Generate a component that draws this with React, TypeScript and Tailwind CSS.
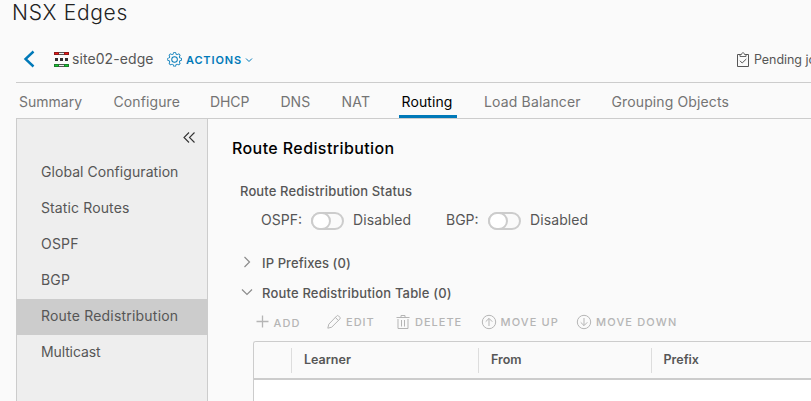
import React from "react";

const tabs = [
  { label: "Summary", box: "w-[94.5px]", track: "tracking-[0px]" },
  { label: "Configure", box: "w-[96.5px]", track: "tracking-[0.1px]" },
  { label: "DHCP", box: "w-[70.5px]", track: "tracking-[-0.1px]" },
  { label: "DNS", box: "w-[61px]", track: "tracking-[0px]" },
  { label: "NAT", box: "w-[60px]", track: "tracking-[0.2px]" },
  { label: "Routing", box: "w-[82.5px]", track: "tracking-[0.1px]", active: true },
  { label: "Load Balancer", box: "w-[127.5px]", track: "tracking-[0.15px]" },
  { label: "Grouping Objects", box: "w-[130px]", track: "tracking-[0.12px]" },
];

const navItems = [
  { label: "Global Configuration", track: "tracking-[0.06px]" },
  { label: "Static Routes", track: "tracking-[0.12px]" },
  { label: "OSPF", track: "tracking-[0.2px]" },
  { label: "BGP", track: "tracking-[0.2px]" },
  { label: "Route Redistribution", track: "tracking-[0.2px]", active: true },
  { label: "Multicast", track: "tracking-[-0.12px]" },
];

function EdgeIcon() {
  return (
    <svg width="15" height="15" viewBox="0 0 15 15" shapeRendering="crispEdges">
      <rect x="0" y="0" width="15" height="3" fill="#555" />
      <rect x="0" y="0" width="5" height="3" fill="#8c1a1a" />
      <rect x="10" y="0" width="5" height="3" fill="#8c1a1a" />
      <rect x="1" y="1" width="3" height="1" fill="#f01818" />
      <rect x="5" y="1" width="5" height="1" fill="#eee" />
      <rect x="11" y="1" width="3" height="1" fill="#f01818" />
      <rect x="1" y="6" width="3" height="3" fill="#333" />
      <rect x="6" y="6" width="3" height="3" fill="#333" />
      <rect x="11" y="6" width="3" height="3" fill="#333" />
      <rect x="0" y="12" width="15" height="3" fill="#555" />
      <rect x="0" y="12" width="5" height="3" fill="#1d7a2c" />
      <rect x="10" y="12" width="5" height="3" fill="#1d7a2c" />
      <rect x="1" y="13" width="3" height="1" fill="#12d030" />
      <rect x="5" y="13" width="5" height="1" fill="#eee" />
      <rect x="11" y="13" width="3" height="1" fill="#12d030" />
    </svg>
  );
}

function GearIcon() {
  return (
    <svg width="15" height="15" viewBox="2 2 32 32" fill="#0079b8" className="-mt-[2px] shrink-0">
      <path d="M18.1 11a7 7 0 1 0 7 7 7 7 0 0 0-7-7Zm0 12a5 5 0 1 1 5-5 5 5 0 0 1-5 5Z" />
      <path d="m32.8 14.7-2.8-.9-.6-1.6 1.4-2.6a1.1 1.1 0 0 0-.2-1.3l-2.9-2.9a1.1 1.1 0 0 0-1.3-.2l-2.6 1.4-1.6-.7-.9-2.8A1.1 1.1 0 0 0 20.300 2.300h-4.100a1.100 1.100 0 0 0-1 .8l-.9 2.800-1.700.7L10 5.200a1.100 1.100 0 0 0-1.300.2L5.800 8.200a1.100 1.100 0 0 0-.2 1.300L7 12.100l-.7 1.600-2.800.9a1.100 1.100 0 0 0-.8 1v4.100a1.100 1.100 0 0 0 .8 1l2.800.9.700 1.600-1.400 2.600a1.100 1.100 0 0 0 .2 1.300l2.900 2.900a1.100 1.100 0 0 0 1.300.2l2.700-1.400 1.600.6.9 2.900a1.100 1.100 0 0 0 1 .8h4.100a1.100 1.100 0 0 0 1-.8l.9-2.900 1.600-.6 2.600 1.400a1.100 1.100 0 0 0 1.300-.2l2.900-2.900a1.100 1.100 0 0 0 .2-1.300l-1.400-2.600.6-1.600 2.900-.9a1.100 1.100 0 0 0 .8-1v-4.100a1.100 1.100 0 0 0-.7-.9Zm-.9 4.400-3.300 1-1.200 3 1.600 3.100-2.200 2.200-3.100-1.600-3 1.200-1 3.300h-3.100l-1-3.300-3-1.200-3.100 1.600-2.200-2.200 1.600-3.100-1.200-3-3.400-1V16l3.400-1 1.200-2.900-1.600-3.100 2.200-2.100 3.100 1.600 3-1.200 1-3.300h3.100l1 3.300 3 1.200 3.100-1.600L29 9.100l-1.600 3 1.200 3 3.300 1Z" />
    </svg>
  );
}

function ClipboardIcon() {
  return (
    <svg width="14" height="16" viewBox="0 0 14 16" fill="none" stroke="#565656">
      <path d="M4 2.500H1.500v12h11v-12H10" />
      <path d="M4 4.500v-2h1.500C5.500.2 8.500.2 8.500 2.500H10v2Z" strokeWidth="0.900" />
      <path d="M4 8.800l2.200 2.200L10.300 7" />
    </svg>
  );
}

function Toggle() {
  return (
    <span className="flex h-[18px] w-[33px] shrink-0 items-center rounded-full border-2 border-[#ccc] bg-[#fafafa]">
      <span className="-ml-[2px] h-[18px] w-[20px] shrink-0 rounded-full border-2 border-[#ccc] bg-white" />
    </span>
  );
}

function Chevron({ d }: { d: string }) {
  return (
    <svg width="14" height="14" viewBox="0 0 14 14" fill="none" stroke="#8c8c8c" strokeWidth="1.200" className="-mt-[3px]">
      <path d={d} />
    </svg>
  );
}

const actions = [
  {
    label: "ADD", box: "w-[71px]", gap: "w-[18.5px]", track: "tracking-[1.1px]", drop: "pt-[2px]",
    icon: <path d="M1.500 7.500h12M7.500 1.500v12" strokeWidth="1.300" />,
  },
  {
    label: "EDIT", box: "w-[68.500px]", gap: "w-[20px]", track: "tracking-[1px]", drop: "",
    icon: <path d="M1.800 14.200l1-4 8-8.300c.6-.6 1.200-.6 1.700 0l1.400 1.400c.5.500.5 1.100 0 1.700l-8.200 8.200ZM9.300 3.400l3.100 3.100" />,
  },
  {
    label: "DELETE", box: "w-[86.500px]", gap: "w-[20.500px]", track: "tracking-[1px]", drop: "",
    icon: <path d="M1.500 3.500h13M3 5v9.500h10V5M6 3V1.500h4V3M6.500 6v6.500M9.500 6v6.500" />,
  },
  {
    label: "MOVE UP", box: "w-[95px]", gap: "w-[19.500px]", track: "tracking-[1.1px]", drop: "",
    icon: (
      <>
        <circle cx="8" cy="8" r="6.700" />
        <path d="M8 12V4.500M4.700 7.700L8 4.400l3.300 3.300" />
      </>
    ),
  },
  {
    label: "MOVE DOWN", box: "w-[110px]", gap: "w-[20px]", track: "tracking-[1.15px]", drop: "",
    icon: (
      <>
        <circle cx="8" cy="8" r="6.700" />
        <path d="M8 4v7.500M4.700 8.300L8 11.600l3.300-3.300" />
      </>
    ),
  },
];

export default function App() {
  return (
    <div className="flex h-[401px] w-[811px] flex-col overflow-hidden whitespace-nowrap bg-[#fafafa] font-['Inter',sans-serif] text-[14px] leading-5 text-[#565656]">
      <h1 className="h-[38px] shrink-0 pl-[12px] text-[21px] font-light leading-[25px] tracking-[0.7px] text-[#222]">
        NSX Edges
      </h1>
      <div className="ml-4 flex h-[45px] shrink-0 items-center border-b border-[#ccc]">
        <svg width="12" height="18" viewBox="0 0 12 18" fill="none" stroke="#0079b8" strokeWidth="2.400" className="-mt-[2px] ml-[7px] shrink-0">
          <path d="M10.500 1.500L2.500 9l8 7.500" />
        </svg>
        <span className="-mt-[2px] ml-[19px] w-[15px] shrink-0"><EdgeIcon /></span>
        <span className="ml-[3px] w-[95px] shrink-0 pb-[2px] tracking-[0.08px]">site02-edge</span>
        <GearIcon />
        <span className="ml-[4px] w-[58.5px] shrink-0 text-[11px] font-semibold tracking-[0.85px] text-[#0079b8]">ACTIONS</span>
        <svg width="8" height="6" viewBox="0 0 8 6" fill="none" stroke="#0079b8" className="shrink-0">
          <path d="M1 1.500l3 3 3-3" />
        </svg>
        <span className="ml-[483.500px] w-[14px] shrink-0"><ClipboardIcon /></span>
        <span className="ml-[4px] shrink-0 text-[12.5px] tracking-[-0.05px]">Pending jobs</span>
      </div>
      <nav className="ml-4 flex h-[36px] shrink-0 items-stretch border-b border-[#ccc] pl-[3px] text-[#747474]">
        {tabs.map((t) => (
          <div key={t.label} className={`${t.box} ${t.track} shrink-0`}>
            {t.active ? (
              <div className="-ml-[3px] h-[35px] w-[58px] border-b-[3px] border-[#0079b8] pl-[3px] leading-[38px] text-black">
                {t.label}
              </div>
            ) : (
              <div className="leading-[38px]">{t.label}</div>
            )}
          </div>
        ))}
      </nav>
      <div className="flex min-h-0 flex-1 pl-4">
        <aside className="w-[192px] shrink-0 border-x border-[#ccc] bg-[#eee]">
          <div className="flex h-[36px] justify-end pr-[11px] pt-[12px]">
            <svg width="14" height="13" viewBox="0 0 14 13" fill="none" stroke="#333" strokeWidth="1.100">
              <path d="M7 1.500L2 6.500l5 5M12.500 1.500l-5 5 5 5" />
            </svg>
          </div>
          {navItems.map((n) => (
            <div key={n.label} className={`h-9 pl-6 leading-[34px] ${n.track} ${n.active ? "bg-[#ccc]" : ""}`}>
              {n.label}
            </div>
          ))}
        </aside>
        <main className="flex min-w-0 flex-1 flex-col">
          <h2 className="ml-6 mt-[19px] h-[43px] shrink-0 text-[16px] font-medium tracking-[0.4px] text-black">Route Redistribution</h2>
          <h3 className="ml-8 h-[20px] shrink-0 text-[13px] font-medium tracking-[0.13px]">Route Redistribution Status</h3>
          <div className="ml-[53px] mt-[10px] flex h-5 shrink-0 items-center">
            <span className="w-[50px] shrink-0 pb-[2px]">OSPF:</span>
            <Toggle />
            <span className="ml-[9px] w-[93px] shrink-0 pb-[2px] tracking-[0.1px]">Disabled</span>
            <span className="w-[42px] shrink-0 pb-[2px]">BGP:</span>
            <Toggle />
            <span className="ml-[9px] pb-[2px] tracking-[0.1px]">Disabled</span>
          </div>
          <div className="ml-[32px] mt-[22px] flex h-[20px] shrink-0 items-center">
            <Chevron d="M4.500 2l5 5-5 5" />
            <span className="ml-[8px] text-[13px] font-medium tracking-[0.1px]">IP Prefixes (0)</span>
          </div>
          <div className="ml-[32px] mt-[10px] flex h-[20px] shrink-0 items-center">
            <Chevron d="M2 4.500l5 5 5-5" />
            <span className="ml-[8px] text-[13px] font-medium tracking-[0.18px]">Route Redistribution Table (0)</span>
          </div>
          <div className="ml-[47px] mt-[9px] flex h-5 shrink-0 items-center text-[11px] font-medium text-[#b5b5b5]">
            {actions.map((a) => (
              <div key={a.label} className={`flex shrink-0 items-center ${a.box}`}>
                <span className={`shrink-0 ${a.gap}`}>
                  <svg width="16" height="16" viewBox="0 0 16 16" fill="none" stroke="#b5b5b5" strokeWidth="1">
                    {a.icon}
                  </svg>
                </span>
                <span className={`${a.track} ${a.drop}`}>{a.label}</span>
              </div>
            ))}
          </div>
          <div className="ml-[45px] mt-[9px] flex min-h-0 flex-1 flex-col rounded-tl-[3px] border-l border-t border-[#ccc] bg-white">
            <div className="flex h-[38px] shrink-0 items-center rounded-tl-[2px] border-b-2 border-[#ccc] bg-[#fafafa] text-[12.5px] font-semibold">
              <div className="h-[25px] w-[38px] border-r border-[#ddd]" />
              <div className="h-[25px] w-[187px] border-r border-[#ddd] pl-[12px] leading-[24px]">Learner</div>
              <div className="h-[25px] w-[173px] border-r border-[#ddd] pl-[12px] leading-[24px]">From</div>
              <div className="h-[25px] pl-[11.500px] leading-[24px]">Prefix</div>
            </div>
          </div>
        </main>
      </div>
    </div>
  );
}
